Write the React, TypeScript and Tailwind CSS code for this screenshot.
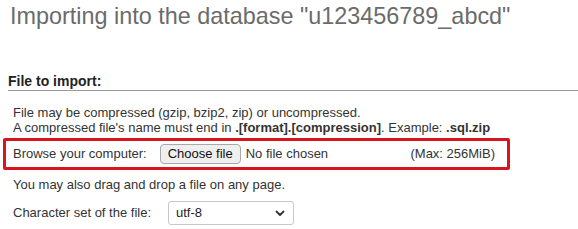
import React from 'react';

const App: React.FC = () => {
    return (
      <div className="w-[578px] h-[229px] overflow-hidden bg-white font-['Liberation_Sans',Arial,sans-serif] text-[13px] text-[#333]">
          <h1 className="pl-[10px] pt-[3px] text-[23.4px] leading-[26px] text-[#6b6b6b] whitespace-nowrap">
              Importing into the database "u123456789_abcd"
          </h1>
          <div className="mt-[44px] ml-[8px]">
              <div className="border-b border-[#9a9a9a] text-[14px] font-bold leading-[17px] text-[#222]">
                  File to import:
              </div>
              <div className="mt-[14px] pl-[5px] leading-[15px]">
                  <p>File may be compressed (gzip, bzip2, zip) or uncompressed.</p>
                  <p>
                      A compressed file's name must end in <b>.[format].[compression]</b>. Example: <b>.sql.zip</b>
                  </p>
              </div>
          </div>
          <div className="mt-[3px] ml-[3px] w-[507px] h-[32px] flex items-center border-[3px] border-[#d8141c] rounded-[2px] pl-[7px] pr-[12px]">
              <span>Browse your computer:</span>
              <button
                type="button"
                className="ml-[13px] h-[20px] px-[7px] border border-[#a8a8a8] rounded-[4px] bg-[#efefef] text-[13px] leading-[18px] text-[#111]"
              >
                  Choose file
              </button>
              <span className="ml-[5px]">No file chosen</span>
              <span className="ml-auto">(Max: 256MiB)</span>
          </div>
          <div className="mt-[7px] pl-[13px] leading-[15px]">
              You may also drag and drop a file on any page.
          </div>
          <div className="mt-[9px] pl-[13px] flex items-center">
              <span>Character set of the file:</span>
              <div className="ml-[17px] w-[126px] h-[24px] border border-[#c8c8c8] rounded-[3px] flex items-center justify-between pl-[7px] pr-[8px]">
                  <span className="text-[#222]">utf-8</span>
                  <svg width="10" height="10" viewBox="0 0 10 10" fill="none">
                      <path d="M1.5 3.5 L5 7 L8.5 3.5" stroke="#333" strokeWidth="1.8" strokeLinecap="round" strokeLinejoin="round" />
                  </svg>
              </div>
          </div>
      </div>
    );
};

export default App;
